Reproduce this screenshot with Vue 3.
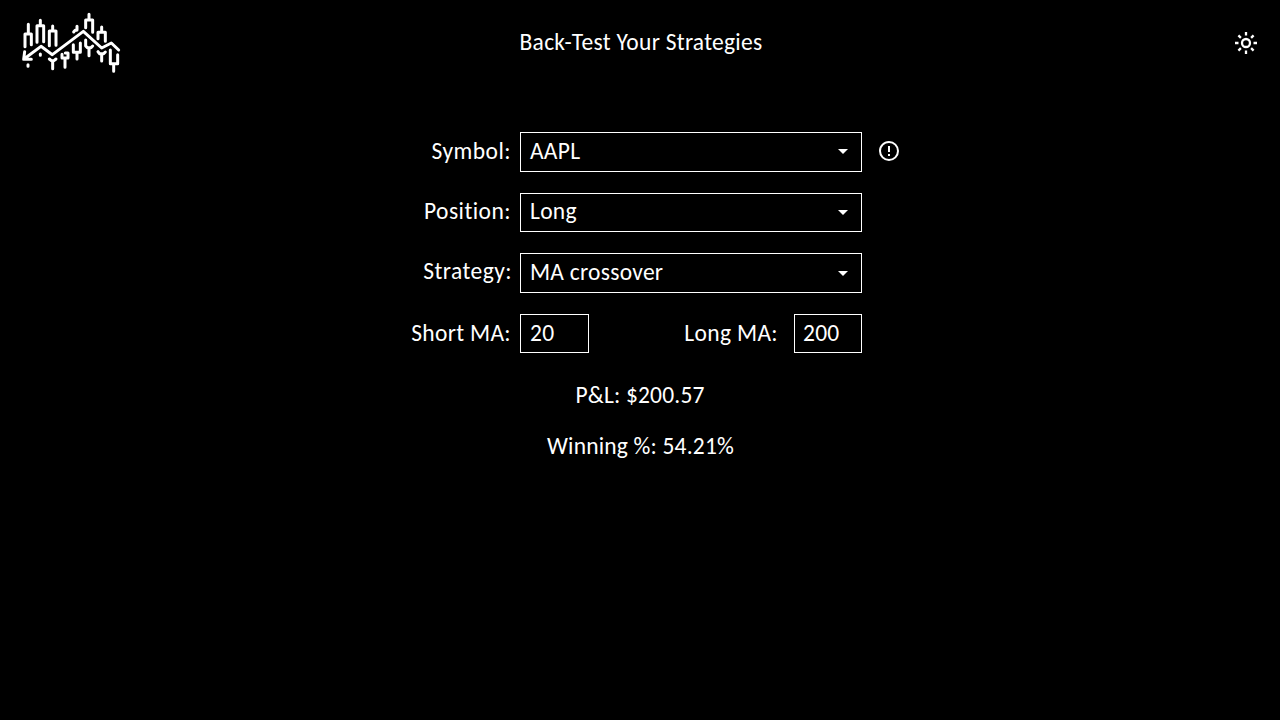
<script setup>
import { ref } from 'vue'
const selects = ref([
  { label: 'Symbol:', value: 'AAPL', info: true, key: 'symbol' },
  { label: 'Position:', value: 'Long', key: 'position' },
  { label: 'Strategy:', value: 'MA crossover', key: 'strategy' },
])
</script>

<template>
  <div class="page">
    <header class="bar">
      <svg class="logo" viewBox="0 0 330 210" aria-label="Logo">
        <g fill="none" stroke="#fff" stroke-width="9" stroke-linecap="round" stroke-linejoin="round">
          <path d="M27 116V78H46V110M37 76V49" />
          <path d="M63 103V53H83V101M73 52V37" />
          <path d="M100 113V69H120V112M110 68V54" />
          <path d="M36 170V175M73 138V142" />
          <path d="M100 153L106 158H114L120 153M110 158V182" />
          <path d="M138 139V150H156V135H148M147 152V178" />
          <path d="M173 72L177 67H182M183 66V55" />
          <path d="M172 110V133H193V105M183 134V153" />
          <path d="M209 59V36H230V73M219 35V19" />
          <path d="M209 96V114L214 119H225L230 114M219 120V143" />
          <path d="M246 92V73H268V100M257 72V57" />
          <path d="M246 131L251 137H263L268 132M257 138V159" />
          <path d="M283 126V167H305V140M293 168V190" />
          <path d="M24 153L75 115L109 140L202 70L257 120L286 105L308 126M26 131L23 154H46" />
        </g>
      </svg>
      <h1 class="title">Back-Test Your Strategies</h1>
      <svg class="sun" viewBox="0 0 24 24" fill="none" stroke="#fff" stroke-width="2.3">
        <circle cx="12" cy="12" r="4" />
        <path d="M12 1V4.5M12 19.5V23M1 12H4.5M19.5 12H23M4.4 4.4L6.9 6.9M17.1 17.1L19.6 19.6M4.4 19.6L6.9 17.1M17.1 6.9L19.6 4.4" />
      </svg>
    </header>

    <main class="form">
      <div v-for="s in selects" :key="s.key" class="row" :class="s.key">
        <span class="label">{{ s.label }}</span>
        <div class="select">
          <span class="value">{{ s.value }}</span>
          <svg class="caret" viewBox="0 0 10 5"><path d="M0 0H10L5 5Z" fill="#fff" /></svg>
        </div>
        <svg v-if="s.info" class="info" viewBox="0 0 24 24" fill="#fff">
          <path d="M11 15h2v2h-2zm0-8h2v6h-2zm1-5C6.47 2 2 6.5 2 12a10 10 0 1 0 10-10zm0 18a8 8 0 1 1 0-16 8 8 0 0 1 0 16z" />
        </svg>
      </div>
      <div class="row averages">
        <span class="label short">Short MA:</span>
        <div class="input"><span class="value">20</span></div>
        <span class="label long">Long MA:</span>
        <div class="input last"><span class="value">200</span></div>
      </div>
    </main>

    <section class="results">
      <p class="pl">P&amp;L: $200.57</p>
      <p class="win">Winning %: 54.21%</p>
    </section>
  </div>
</template>

<style>
body { background: #000; }
</style>
<style scoped>
.page { width: 1280px; height: 720px; overflow: hidden; background: #000; color: #fff; font: 400 23.5px/26px Calibri, Carlito, Lato, sans-serif; letter-spacing: 0.27px; font-variant-ligatures: none; white-space: nowrap; }
.bar { display: grid; grid-template-columns: 1fr auto 1fr; height: 86px; align-items: center; padding: 0 22px 0 16px; box-sizing: border-box; }
.logo { width: 110px; height: 70px; }
.title { margin: 0 -4px 2px 4px; font: inherit; }
.sun { width: 24px; height: 24px; justify-self: end; }
.form { margin: 46px 0 0 400px; display: flex; flex-direction: column; gap: 21px; }
.row { display: flex; align-items: center; height: 40px; }
.position, .averages { height: 39px; }
.label { width: 111px; margin-right: 9px; padding-bottom: 2px; text-align: right; letter-spacing: 0.45px; }
.value { padding-bottom: 2px; }
.averages .label, .averages .value { padding-bottom: 1px; }
.position .label, .position .value { padding-bottom: 3px; }
.strategy .label { width: 112px; margin-right: 8px; padding-bottom: 4px; }
.label.short { letter-spacing: 0.33px; }
.select, .input { border: 1px solid #fff; box-sizing: border-box; height: 100%; width: 342px; padding: 0 13px 0 9px; display: flex; align-items: center; justify-content: space-between; flex-shrink: 0; }
.caret { width: 10px; height: 5px; }
.symbol .caret { margin-bottom: 1px; }
.info { width: 24px; height: 24px; margin-left: 15px; margin-bottom: 2px; }
.input { width: 69px; padding: 0 9px; }
.label.long { width: 189px; margin-right: 16px; letter-spacing: 0.35px; }
.input.last { width: 68px; padding-left: 8px; }
.results { text-align: center; margin-top: 29px; }
.results p { margin: 0 0 25px; letter-spacing: 0.18px; }
.results .win { padding-left: 1px; }
</style>
